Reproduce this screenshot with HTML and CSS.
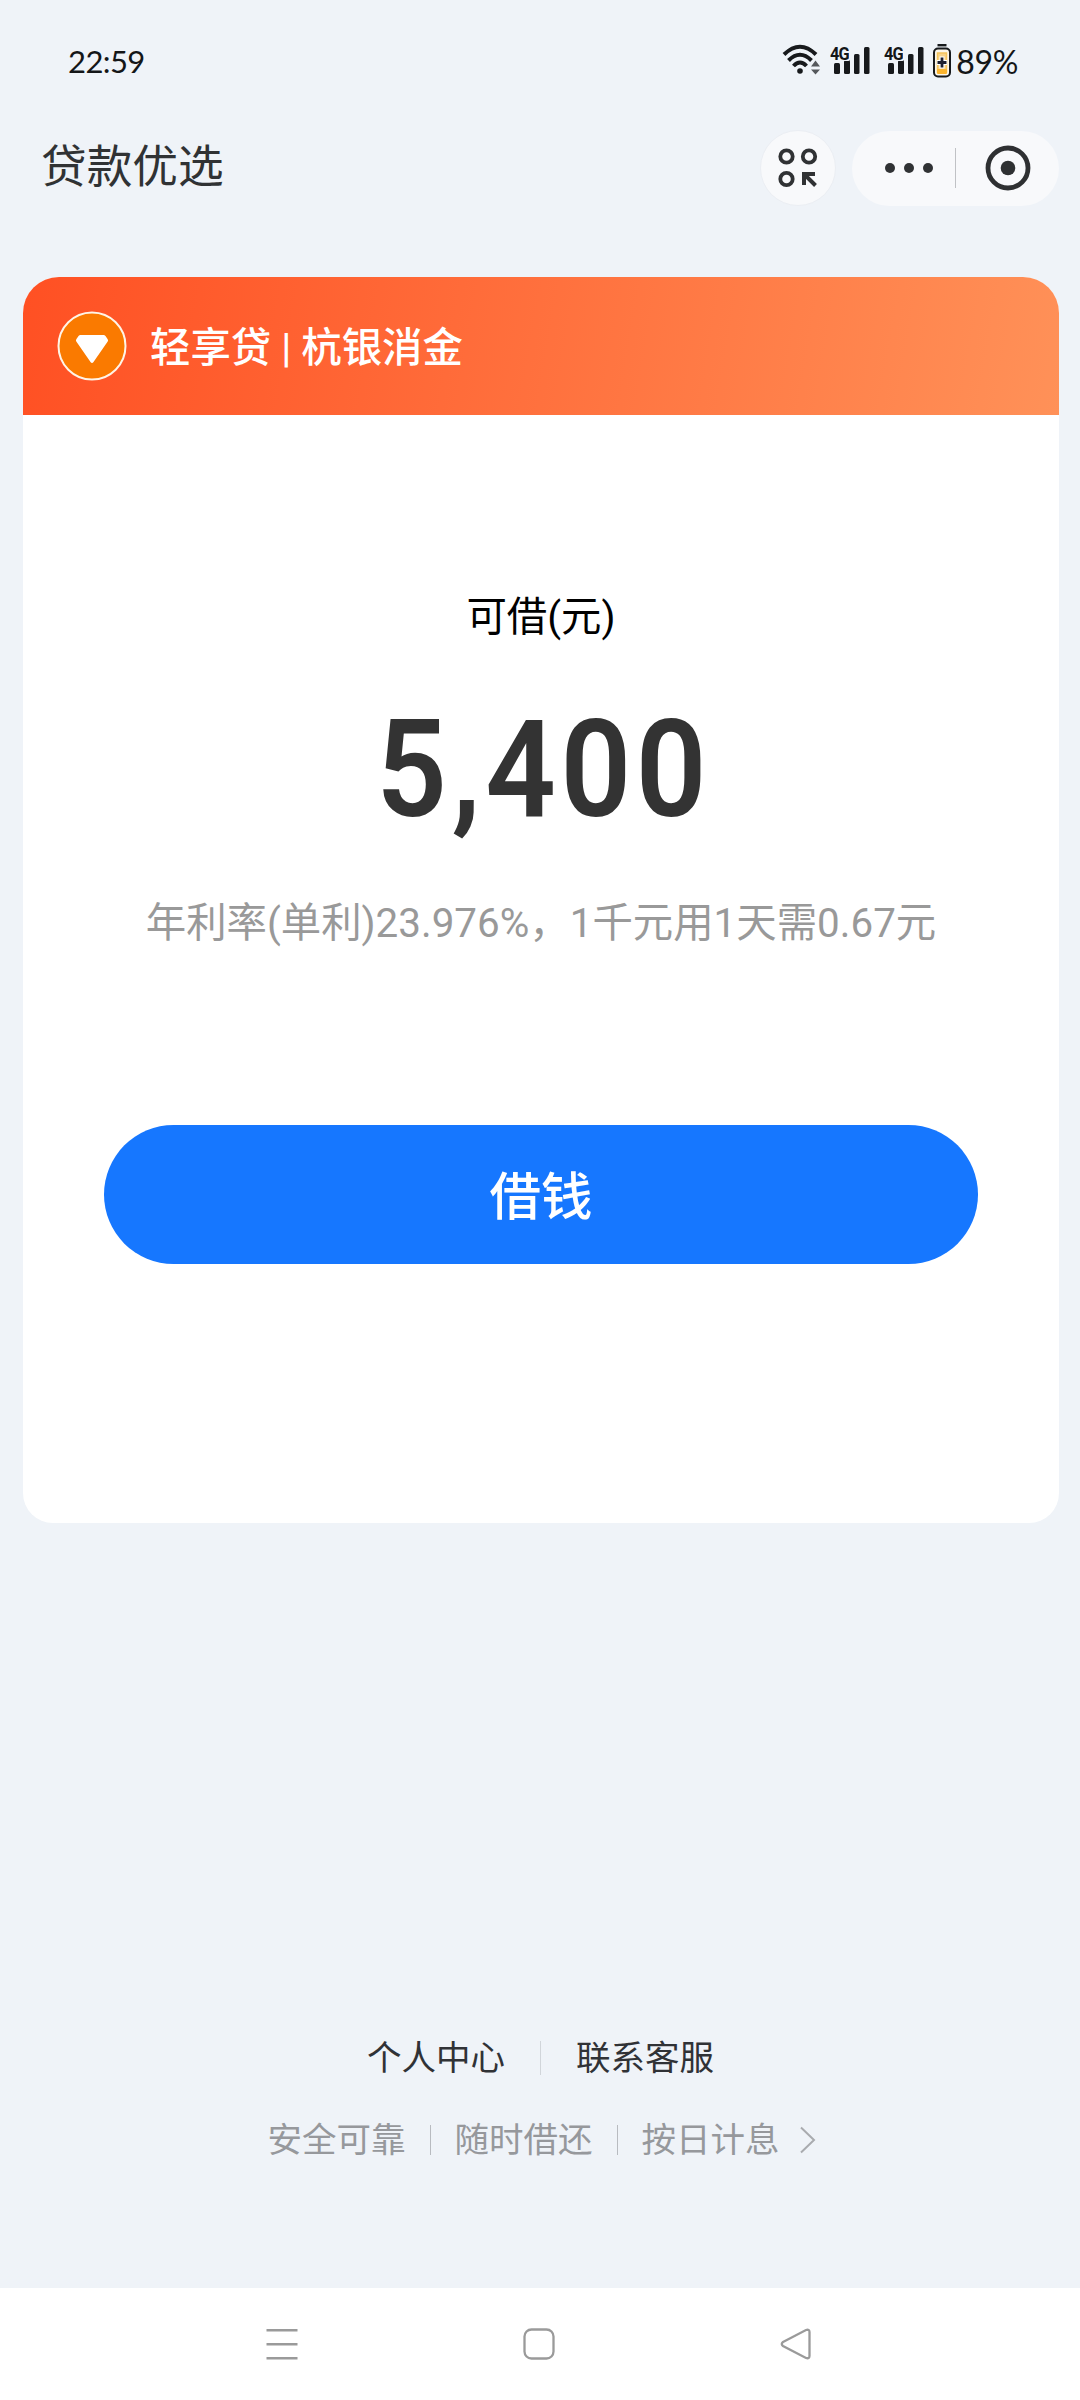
FILE: index.html
```html
<!DOCTYPE html>
<html lang="zh-CN">
<head>
<meta charset="utf-8">
<title>贷款优选</title>
<link rel="stylesheet" href="styles.css">
</head>
<body>
<div class="screen">
  <div class="status-bar">
    <span class="clock">22:59</span>
    <div class="status-icons">
      <svg class="wifi" width="40" height="36" viewBox="0 0 40 36" fill="none" stroke="#17191c" stroke-width="4">
        <path d="M3 11.500Q19 -4 35 11.500M7.500 17.500Q19 6 30.500 17.500M12.500 23Q19 16 25.500 23"/>
        <circle cx="19" cy="28" r="2.800" fill="#17191c" stroke="none"/>
        <path d="M30 23.500l4.500-6 4.500 6zM30 26.500h9l-4.500 5z" fill="#55585c" stroke="none"/>
      </svg>
      <div class="signal"><span class="net">4G</span>
        <svg width="42" height="36" viewBox="0 0 42 36" fill="#17191c"><rect x="4" y="20" width="6" height="11" rx="1.500"/><rect x="14" y="17" width="6" height="14" rx="1.500"/><rect x="24" y="11" width="5.500" height="20" rx="1.500"/><rect x="34" y="4" width="5.500" height="27" rx="1.500"/></svg>
      </div>
      <div class="signal second"><span class="net">4G</span>
        <svg width="42" height="36" viewBox="0 0 42 36" fill="#17191c"><rect x="4" y="20" width="6" height="11" rx="1.500"/><rect x="14" y="17" width="6" height="14" rx="1.500"/><rect x="24" y="11" width="5.500" height="20" rx="1.500"/><rect x="34" y="4" width="5.500" height="27" rx="1.500"/></svg>
      </div>
      <svg class="battery" width="18" height="36" viewBox="0 0 18 36" fill="none">
        <path d="M4.500 2.200h9" stroke="#17191c" stroke-width="2.400"/>
        <rect x="1" y="5.500" width="16" height="28" rx="4" fill="#fbf6ea" stroke="#17191c" stroke-width="2"/>
        <rect x="4.500" y="10" width="9" height="19" fill="#f6d38b" stroke="#f4c35c" stroke-width="1.500"/>
        <rect x="4" y="26" width="10" height="5" rx="1" fill="#fbb42d"/>
        <path d="M9 13.500v12M4 19.500h10" stroke="#fff" stroke-width="5"/>
        <path d="M9 14.500v10M4.500 19.500h9" stroke="#1d2030" stroke-width="2.800"/>
      </svg>
      <span class="percent">89%</span>
    </div>
  </div>

  <header class="title-bar">
    <h1>贷款优选</h1>
    <div class="round-button">
      <svg width="40" height="40" viewBox="0 0 40 40" fill="none" stroke="#303234" stroke-width="3.800">
        <circle cx="8.500" cy="8.500" r="6.200"/><circle cx="31" cy="8.500" r="6.200"/><circle cx="8.500" cy="31" r="6.200"/>
        <path d="M26 37V26h11M26.500 26.500L37.500 37.500" stroke-width="4"/>
      </svg>
    </div>
    <div class="capsule">
      <svg class="dots" width="48" height="10" viewBox="0 0 48 10" fill="#303234"><circle cx="5" cy="5" r="5"/><circle cx="24" cy="5" r="5"/><circle cx="43" cy="5" r="5"/></svg>
      <i class="capsule-line"></i>
      <svg width="46" height="46" viewBox="0 0 46 46"><circle cx="23" cy="23" r="20" fill="none" stroke="#2e3032" stroke-width="4.800"/><circle cx="23" cy="23" r="7.300" fill="#2e3032"/></svg>
    </div>
  </header>

  <main class="card">
    <div class="card-head">
      <svg width="70" height="70" viewBox="0 0 70 70"><circle cx="35" cy="35" r="33.500" fill="#fa7a00" stroke="#fff4e6" stroke-width="2"/><path d="M23.500 24h23q1.200 0 2 1l2.200 3.200q.8 1.200 0 2.200L36.500 51q-1.500 2-3 0L19.300 30.400q-.8-1 0-2.200L21.500 25q.8-1 2-1z" fill="#fff"/></svg>
      <span class="product">轻享贷 | 杭银消金</span>
    </div>
    <div class="card-body">
      <p class="label">可借(元)</p>
      <p class="amount">5,400</p>
      <p class="rate">年利率(单利)23.976%，1千元用1天需0.67元</p>
      <button class="borrow">借钱</button>
    </div>
  </main>

  <footer>
    <div class="links"><span>个人中心</span><i></i><span>联系客服</span></div>
    <div class="features"><span>安全可靠</span><i></i><span>随时借还</span><i></i><span>按日计息</span>
      <svg width="17" height="28" viewBox="0 0 17 28" fill="none" stroke="#a9abaf" stroke-width="2"><path d="M2 1.500L15 14 2 26.500"/></svg>
    </div>
  </footer>

  <nav>
    <svg width="32" height="32" viewBox="0 0 32 32" stroke="#9a9a9a" stroke-width="2.600"><path d="M.5 2.300h31M.5 16.300h31M.5 30.300h31"/></svg>
    <svg width="32" height="32" viewBox="0 0 32 32" fill="none" stroke="#9a9a9a" stroke-width="2.300"><rect x="1.500" y="1.500" width="29" height="29" rx="7"/></svg>
    <svg width="32" height="32" viewBox="0 0 32 32" fill="none" stroke="#9a9a9a" stroke-width="2.300"><path d="M3 14L26 2Q29.500 1 29.500 4V28Q29.500 31 26 30L3 18Q.5 16 3 14z"/></svg>
  </nav>
</div>
</body>
</html>
```
FILE: styles.css
```css
* { box-sizing: border-box; }
body, h1, p { margin: 0; }
body { background: #eff3f8; }
svg { display: block; flex: none; }

.screen {
  width: 1080px;
  height: 2400px;
  display: flex;
  flex-direction: column;
  font-family: Roboto, "Noto Sans CJK SC", sans-serif;
  white-space: nowrap;
}

.status-bar {
  height: 124px;
  padding: 0 62px 2px 68px;
  display: flex;
  align-items: center;
  justify-content: space-between;
  font-family: Lato, sans-serif;
  font-size: 31px;
  color: #141618;
}
.clock { letter-spacing: -0.6px; }
.status-icons { display: flex; align-items: center; }
.wifi { margin-right: 9px; }
.signal { position: relative; margin-right: 12px; }
.net {
  position: absolute;
  left: 0;
  top: 1px;
  height: 17px;
  font: 700 19px/19px Roboto, sans-serif;
  letter-spacing: -1px;
  transform: scaleX(0.86);
  transform-origin: left;
  background: #eff3f8;
}
.battery { margin-right: 5px; }
.signal.second { margin-right: 7px; }
.percent { font-size: 32px; letter-spacing: -0.3px; }

.title-bar {
  height: 88px;
  padding: 0 21px 0 41px;
  display: flex;
  align-items: center;
}
h1 {
  flex: 1;
  font-size: 45.7px;
  font-weight: 400;
  line-height: 60px;
  color: #303234;
}
.round-button {
  width: 76px;
  height: 76px;
  border-radius: 50%;
  background: #f8f9fb;
  border: 1px solid #ebeef3;
  display: flex;
  align-items: center;
  justify-content: center;
  margin-right: 16px;
}
.capsule {
  width: 207px;
  height: 75px;
  border-radius: 38px;
  background: #f8f9fb;
  display: flex;
  align-items: center;
  padding-left: 33px;
}
.capsule-line { width: 1px; height: 40px; background: #c0c2c5; margin: 0 29px 0 22px; }

.card {
  height: 1246px;
  margin: 65px 21px 0 23px;
  border-radius: 36px 36px 30px 30px;
  overflow: hidden;
  background: #fff;
}
.card-head {
  height: 138px;
  padding-left: 34px;
  display: flex;
  align-items: center;
  gap: 23px;
  background: linear-gradient(100deg, #ff5023, #ff9158);
}
.product { color: #fff; font-size: 40.4px; font-weight: 500; padding-bottom: 4px; }
.card-body { display: flex; flex-direction: column; align-items: center; }
.label { margin-top: 173px; font-size: 40.4px; line-height: 60px; color: #000; }
.amount {
  margin-top: 42px;
  font-size: 136px;
  line-height: 160px;
  font-weight: 600;
  letter-spacing: 5px;
  padding-left: 5px;
  color: #333;
  transform: scaleX(0.91);
}
.rate { margin-top: 44px; font-size: 40.4px; line-height: 60px; color: #999; }
.borrow {
  width: 874px;
  height: 139px;
  margin-top: 171px;
  padding: 0 0 5px;
  border: 0;
  border-radius: 70px;
  background: #1677ff;
  color: #fff;
  font: 500 51.5px Roboto, "Noto Sans CJK SC", sans-serif;
}

footer {
  height: 765px;
  padding-top: 510px;
  display: flex;
  flex-direction: column;
  align-items: center;
  gap: 32px;
  font-size: 34.5px;
  line-height: 50px;
}
.links, .features { display: flex; align-items: center; }
.links { color: #303236; padding-left: 1px; }
.links i { width: 1px; height: 34px; background: #d1d5da; margin: 0 35px; }
.features { color: #96989c; padding-left: 3px; }
.features i { width: 1px; height: 30px; background: #b8bbc0; margin: 0 24px; }
.features svg { margin-left: 19px; }

nav {
  height: 112px;
  background: #fff;
  display: flex;
  align-items: center;
  justify-content: space-between;
  padding: 0 268px 0 266px;
}
```
